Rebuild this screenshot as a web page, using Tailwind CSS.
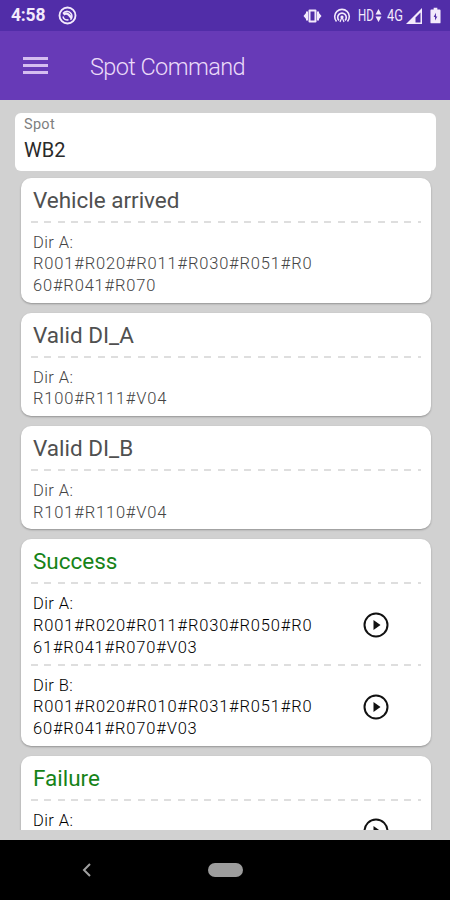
<!DOCTYPE html>
<html lang="en">
<head>
  <meta charset="UTF-8">
  <meta name="viewport" content="width=device-width, initial-scale=1.0">
  <title>Spot Command</title>
  <script src="https://cdn.jsdelivr.net/npm/@tailwindcss/browser@4"></script>
</head>
<body class="bg-black font-['Roboto',sans-serif]">
<div class="flex h-[900px] w-[450px] flex-col overflow-hidden">

  <!-- Status bar -->
  <div class="flex h-[31px] shrink-0 items-center bg-[#512da8] pl-[11px] pr-[9px] text-[#f3eafc]">
    <span class="pt-px text-[17.5px] font-bold leading-none tracking-[-0.2px]">4:58</span>
    <svg class="ml-[13px] h-[19px] w-[19px]" viewBox="0 0 19 19" fill="none" stroke="currentColor">
      <circle cx="9.5" cy="9.5" r="8" stroke-width="1.9"/>
      <path d="M5 7.500c2-3 6-3 8 0 1.500 2.200 1 4.500-.5 6.300M5 10.500c.5 2.500 3 3.800 5.500 3.300" stroke-width="1.5"/>
      <path d="M5.500 8.500c2-1.500 4-1 5.500.5l2.500 3" stroke-width="2.4"/>
    </svg>
    <div class="ml-auto flex items-center">
      <!-- vibrate -->
      <svg class="h-4 w-[19px]" viewBox="0 0 19 16" fill="currentColor">
        <path d="M.5 8L3 5v-1.500h2v9H3V11zM18.500 8L16 5v-1.500h-2v9h2V11z"/>
        <path fill-rule="evenodd" d="M6.500 1.500h6a1 1 0 0 1 1 1v11a1 1 0 0 1-1 1h-6a1 1 0 0 1-1-1v-11a1 1 0 0 1 1-1zM7.500 3.500v9h4v-9z"/>
      </svg>
      <!-- hotspot -->
      <svg class="ml-[11px] h-4 w-[18px]" viewBox="0 0 18 16" fill="none" stroke="currentColor" stroke-width="1.6">
        <path d="M3.500 13.500a7.300 7.300 0 1 1 11 0"/>
        <path d="M6 12.500a4.300 4.300 0 1 1 6 0"/>
        <path d="M7 14l2-5 2 5" stroke-width="1.2"/>
        <circle cx="9" cy="9" r="1.6" fill="currentColor" stroke="none"/>
      </svg>
      <span class="ml-[7px] w-4 origin-left scale-x-[.72] text-[16px] leading-none">HD</span>
      <svg class="ml-[1px] h-[13px] w-[7px]" viewBox="0 0 7 13" fill="currentColor"><path d="M3.500 0l3 5.500h-6zM3.500 13l3-5.500h-6z"/></svg>
      <span class="ml-[5px] w-[17px] origin-left scale-x-[.8] text-[16px] leading-none">4G</span>
      <svg class="ml-[2px] h-4 w-4" viewBox="0 0 16 16" fill="currentColor"><path fill-rule="evenodd" d="M0 16L16 0v16zM9.500 14.500h5V4.500l-5 5z"/></svg>
      <svg class="ml-[8px] h-[17px] w-[11px]" viewBox="0 0 12 17" fill="currentColor"><path fill-rule="evenodd" d="M4 0h4v2h2.500a1 1 0 0 1 1 1v13a1 1 0 0 1-1 1h-9a1 1 0 0 1-1-1V3a1 1 0 0 1 1-1H4zM6.500 5.500l-2.500 4.500h1.500v4l2.500-4.500h-1.500z"/></svg>
    </div>
  </div>

  <!-- App bar -->
  <header class="flex h-[69px] shrink-0 items-center bg-[#673ab7] pl-[23px] text-[#ebdbf9]">
    <div class="flex w-[25px] flex-col gap-[4px]">
      <span class="h-[3px] bg-[#d5bdf0]"></span>
      <span class="h-[3px] bg-[#d5bdf0]"></span>
      <span class="h-[3px] bg-[#d5bdf0]"></span>
    </div>
    <h1 class="ml-[42px] pt-[4px] text-[23.5px] font-light tracking-[-0.6px]">Spot Command</h1>
  </header>

  <main class="flex h-[740px] shrink-0 flex-col bg-[#d1d1d1] pb-[10px] pt-[13px]">

    <!-- Spot picker -->
    <div class="ml-[15px] h-[58px] w-[421px] shrink-0 rounded-[6px] bg-white pl-[9px] pt-[3px]">
      <div class="text-[14.5px] leading-[18px] tracking-[0.3px] text-[#808080]">Spot</div>
      <div class="mt-[4px] text-[20px] leading-[24px] text-[#2a2a2a]">WB2</div>
    </div>

    <!-- Command cards -->
    <div class="min-h-0 flex-1 space-y-[10px] overflow-hidden pl-[20.5px] pr-[19.5px] pt-[6.7px] text-[16.5px] font-light leading-[21.7px] tracking-[0.82px]">

      <section class="rounded-[10px] bg-white pl-[10.5px] pr-[10px] shadow-[0_1px_2px_rgba(0,0,0,0.3)]">
        <h2 class="h-[43px] pl-[2px] pt-[7px] text-[22.5px] font-normal leading-[30px] tracking-[-0.02px] text-[#505050]">Vehicle arrived</h2>
        <div class="h-[2px] bg-[repeating-linear-gradient(90deg,#dedede_0_7px,transparent_7px_13.33px)]"></div>
        <div class="pb-[6px] pl-[2px] pt-[8.9px] text-[#444]">
          <p class="tracking-[0.4px]">Dir A:</p>
          <p>R001#R020#R011#R030#R051#R0<br>60#R041#R070</p>
        </div>
      </section>

      <section class="rounded-[10px] bg-white pl-[10.5px] pr-[10px] shadow-[0_1px_2px_rgba(0,0,0,0.3)]">
        <h2 class="h-[43px] pl-[2px] pt-[7px] text-[22.5px] font-normal leading-[30px] tracking-[-0.02px] text-[#505050]">Valid DI_A</h2>
        <div class="h-[2px] bg-[repeating-linear-gradient(90deg,#dedede_0_7px,transparent_7px_13.33px)]"></div>
        <div class="pb-[6px] pl-[2px] pt-[8.9px] text-[#444]">
          <p class="tracking-[0.4px]">Dir A:</p>
          <p>R100#R111#V04</p>
        </div>
      </section>

      <section class="rounded-[10px] bg-white pl-[10.5px] pr-[10px] shadow-[0_1px_2px_rgba(0,0,0,0.3)]">
        <h2 class="h-[43px] pl-[2px] pt-[7px] text-[22.5px] font-normal leading-[30px] tracking-[-0.02px] text-[#505050]">Valid DI_B</h2>
        <div class="h-[2px] bg-[repeating-linear-gradient(90deg,#dedede_0_7px,transparent_7px_13.33px)]"></div>
        <div class="pb-[6px] pl-[2px] pt-[8.9px] text-[#444]">
          <p class="tracking-[0.4px]">Dir A:</p>
          <p>R101#R110#V04</p>
        </div>
      </section>

      <section class="rounded-[10px] bg-white pl-[10.5px] pr-[10px] shadow-[0_1px_2px_rgba(0,0,0,0.3)]">
        <h2 class="h-[43px] pl-[2px] pt-[7px] text-[22.5px] font-normal leading-[30px] tracking-[-0.02px] text-[#168318]">Success</h2>
        <div class="h-[2px] bg-[repeating-linear-gradient(90deg,#dedede_0_7px,transparent_7px_13.33px)]"></div>
        <div class="flex items-center justify-between pb-[6px] pl-[2px] pr-[31.5px] pt-[8.9px] text-black">
          <div>
            <p class="tracking-[0.4px]">Dir A:</p>
            <p>R001#R020#R011#R030#R050#R0<br>61#R041#R070#V03</p>
          </div>
          <svg class="-mt-px h-[26px] w-[26px]" viewBox="0 0 26 26"><circle cx="13" cy="13" r="11.5" fill="none" stroke="#111" stroke-width="2"/><path d="M10.500 8l7 5-7 5z" fill="#111"/></svg>
        </div>
        <div class="h-[2px] bg-[repeating-linear-gradient(90deg,#dedede_0_7px,transparent_7px_13.33px)]"></div>
        <div class="flex items-center justify-between pb-[6px] pl-[2px] pr-[31.5px] pt-[8.5px] text-black">
          <div>
            <p class="tracking-[0.4px]">Dir B:</p>
            <p>R001#R020#R010#R031#R051#R0<br>60#R041#R070#V03</p>
          </div>
          <svg class="-mt-px h-[26px] w-[26px]" viewBox="0 0 26 26"><circle cx="13" cy="13" r="11.5" fill="none" stroke="#111" stroke-width="2"/><path d="M10.500 8l7 5-7 5z" fill="#111"/></svg>
        </div>
      </section>

      <!-- Scrolls under the bottom edge -->
      <section class="rounded-[10px] bg-white pl-[10.5px] pr-[10px] shadow-[0_1px_2px_rgba(0,0,0,0.3)]">
        <h2 class="h-[43px] pl-[2px] pt-[7px] text-[22.5px] font-normal leading-[30px] tracking-[-0.02px] text-[#168318]">Failure</h2>
        <div class="h-[2px] bg-[repeating-linear-gradient(90deg,#dedede_0_7px,transparent_7px_13.33px)]"></div>
        <div class="flex justify-between pb-[6px] pl-[2px] pr-[31.5px] pt-[8.9px] text-black">
          <p class="tracking-[0.4px]">Dir A:</p>
          <svg class="mt-[8px] h-[26px] w-[26px]" viewBox="0 0 26 26"><circle cx="13" cy="13" r="11.5" fill="none" stroke="#111" stroke-width="2"/><path d="M10.500 8l7 5-7 5z" fill="#111"/></svg>
        </div>
      </section>

    </div>
  </main>

  <!-- Navigation bar -->
  <nav class="flex h-[60px] shrink-0 items-center bg-black pl-[82px]">
    <svg class="h-[14px] w-[10px]" viewBox="0 0 10 14" fill="none" stroke="#a0a0a0" stroke-width="2"><path d="M8 1L2 7l6 6"/></svg>
    <span class="ml-[116px] h-[14px] w-[35px] rounded-full bg-[#9c9c9c]"></span>
  </nav>

</div>
</body>
</html>
